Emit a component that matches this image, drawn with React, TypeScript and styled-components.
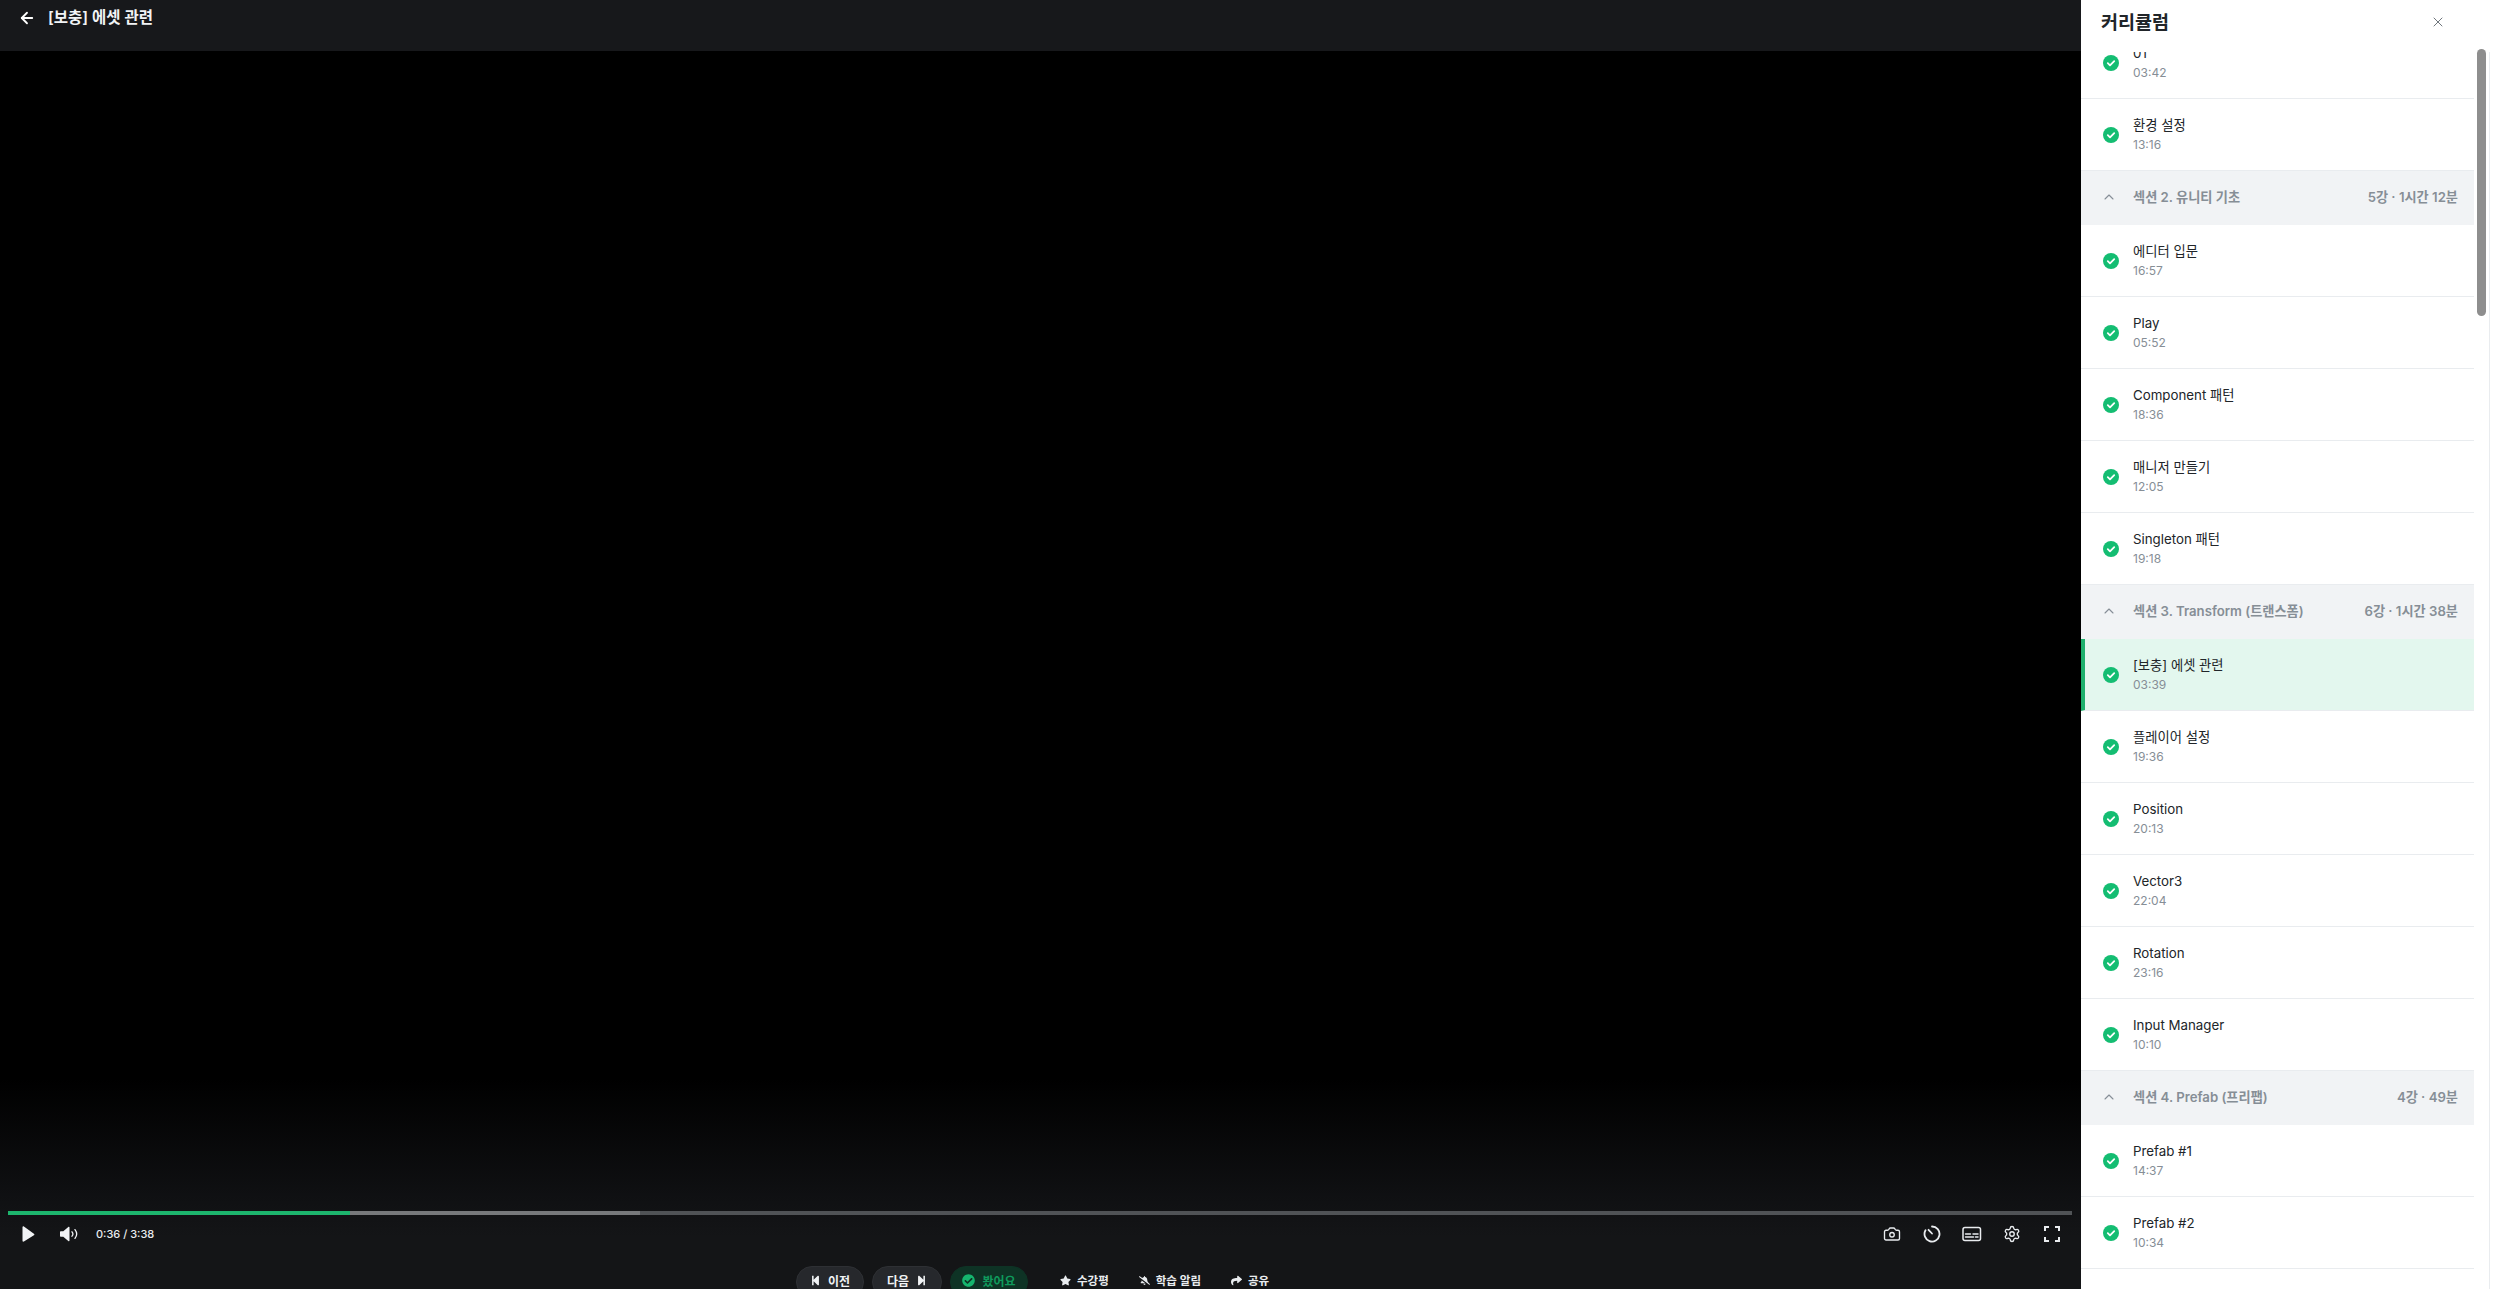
import React from "react";
import styled, { createGlobalStyle } from "styled-components";
import { ArrowLeft, Camera, ChevronUp, Settings, X } from "lucide-react";
import { FaBellSlash, FaCheckCircle, FaShare, FaStar, FaStepBackward, FaStepForward } from "react-icons/fa";

const Global = createGlobalStyle`
  html, body { margin: 0; padding: 0; height: 100%; overflow: hidden; background: #000; }
  body { font-family: Inter, "Noto Sans CJK KR", "Noto Sans", sans-serif; }
  * { box-sizing: border-box; }
`;

const Page = styled.div`
  display: flex;
  width: 2494px;
  height: 1289px;
  overflow: hidden;
`;
const PlayerColumn = styled.main`
  flex: 0 0 2081px;
  display: flex;
  flex-direction: column;
  height: 1289px;
  overflow: hidden;
  background: #000;
`;
const TopBar = styled.header`
  flex: 0 0 51px;
  display: flex;
  align-items: flex-start;
  gap: 12px;
  padding: 8px 0 0 18px;
  background: #17181b;
  color: #fff;
`;
const BackIcon = styled(ArrowLeft)`
  width: 18px;
  height: 18px;
  margin-top: 1px;
`;
const LessonTitle = styled.h1`
  margin: 0;
  font-size: 15.5px;
  line-height: 20px;
  font-weight: 600;
  color: #f1f3f5;
`;
const Video = styled.div`
  flex: 1 1 0;
  background: #000;
`;
const Controls = styled.section`
  flex: 0 0 210px;
  display: flex;
  flex-direction: column;
  padding-top: 132px;
  overflow: hidden;
  background: linear-gradient(180deg, #000 0%, #0f1012 55%, #141517 75%);
`;
const Track = styled.div`
  display: flex;
  flex: 0 0 4px;
  margin: 0 9px 0 8px;
  background: #505356;
`;
const TrackPlayed = styled.div`
  flex: 0 0 342px;
  background: #1db56d;
`;
const TrackBuffered = styled.div`
  flex: 0 0 290px;
  background: #77797b;
`;
const PlayerRow = styled.div`
  flex: 0 0 37px;
  display: flex;
  align-items: center;
  margin-bottom: 2px;
  padding: 0 19px 0 21px;
  color: #f1f3f5;
`;
const PlayIcon = styled.svg`
  width: 14px;
  height: 16px;
  margin-right: 25px;
`;
const VolumeIcon = styled.svg`
  width: 18px;
  height: 16px;
  margin-right: 18px;
`;
const TimeText = styled.span`
  font-size: 11px;
  font-weight: 500;
  color: #e9ecef;
`;
const RightTools = styled.div`
  margin-left: auto;
  display: flex;
  align-items: center;
  gap: 20px;
`;
const ToolSlot = styled.span`
  display: flex;
  align-items: center;
  justify-content: center;
  width: 20px;
  height: 20px;
  color: #e9ecef;
`;
const ActionRow = styled.div`
  display: flex;
  justify-content: flex-start;
  align-items: center;
  gap: 8px;
  margin-top: 12px;
  padding-left: 796px;
`;
const NavButton = styled.button<{ $w: number }>`
  display: flex;
  align-items: center;
  justify-content: center;
  gap: 7px;
  width: ${(p) => p.$w}px;
  height: 32px;
  padding: 0 0 4px;
  border: 1px solid #2e3034;
  border-radius: 16px;
  background: #26282c;
  color: #f1f3f5;
  font: 600 12px Inter, "Noto Sans CJK KR", sans-serif;
  svg { width: 11px; height: 11px; }
`;
const DoneButton = styled(NavButton)`
  border-color: #0e3325;
  background: #0e3325;
  color: #0f9a5c;
  svg { width: 13px; height: 13px; color: #15b56e; }
`;
const LinkButton = styled.button<{ $ml: number }>`
  display: flex;
  align-items: center;
  gap: 6px;
  margin-left: ${(p) => p.$ml}px;
  height: 32px;
  padding: 0 0 4px;
  border: 0;
  background: none;
  color: #e9ecef;
  font: 600 11.5px Inter, "Noto Sans CJK KR", sans-serif;
  svg { width: 11px; height: 11px; }
`;
const Panel = styled.aside`
  position: relative;
  flex: 1;
  display: flex;
  flex-direction: column;
  height: 1289px;
  overflow: hidden;
  background: #fff;
`;
const PanelHead = styled.div`
  flex: 0 0 52px;
  display: flex;
  align-items: flex-start;
  justify-content: space-between;
  padding: 9px 48px 0 20px;
  background: #fff;
  position: relative;
  z-index: 1;
`;
const PanelTitle = styled.h2`
  margin: 0;
  font-size: 18.5px;
  line-height: 26px;
  font-weight: 700;
  color: #212529;
`;
const CloseIcon = styled(X)`
  width: 16px;
  height: 16px;
  margin-top: 5px;
  color: #6f767c;
`;
const ListClip = styled.div`
  flex: 1;
  overflow: hidden;
  border-right: 1px solid #e9ecef;
  margin-right: 4px;
`;
const List = styled.div`
  width: 393px;
  margin-top: -25px;
`;
const SectionHead = styled.div`
  display: flex;
  align-items: center;
  height: 54px;
  padding: 0 16px 3px 20px;
  background: #f1f3f5;
  color: #868e96;
  font-size: 13.2px;
  font-weight: 600;
`;
const Chevron = styled(ChevronUp)`
  width: 16px;
  height: 16px;
  margin-right: 16px;
  color: #868e96;
  stroke-width: 1.6;
`;
const SectionMeta = styled.span`
  margin-left: auto;
`;
const Row = styled.div<{ $active?: boolean }>`
  display: flex;
  align-items: flex-start;
  height: 72px;
  padding: 20px 0 0 ${(p) => (p.$active ? 18 : 22)}px;
  background: ${(p) => (p.$active ? "#e3f7ee" : "#fff")};
  border-left: ${(p) => (p.$active ? "4px solid #1eb06c" : "0")};
  border-bottom: 1px solid #e9ecef;
`;
const CheckIcon = styled.svg`
  flex: 0 0 16px;
  width: 16px;
  height: 16px;
  margin: 8px 14px 0 0;
`;
const RowText = styled.div`
  display: flex;
  flex-direction: column;
  margin-top: -3px;
`;
const RowTitle = styled.span`
  font-size: 13.3px;
  line-height: 18px;
  font-weight: 400;
  color: #212529;
`;
const RowTime = styled.span`
  margin-top: 2px;
  font-size: 12px;
  line-height: 18px;
  color: #868e96;
`;
const Thumb = styled.div`
  position: absolute;
  top: 49px;
  left: 396px;
  width: 9px;
  height: 267px;
  border-radius: 5px;
  background: #8e8e8e;
  z-index: 2;
`;

type Item = { section: true; title: string; meta: string } | { section?: false; title: string; time: string; active?: boolean };

const items: Item[] = [
  { title: "01", time: "03:42" },
  { title: "환경 설정", time: "13:16" },
  { section: true, title: "섹션 2. 유니티 기초", meta: "5강 · 1시간 12분" },
  { title: "에디터 입문", time: "16:57" },
  { title: "Play", time: "05:52" },
  { title: "Component 패턴", time: "18:36" },
  { title: "매니저 만들기", time: "12:05" },
  { title: "Singleton 패턴", time: "19:18" },
  { section: true, title: "섹션 3. Transform (트랜스폼)", meta: "6강 · 1시간 38분" },
  { title: "[보충] 에셋 관련", time: "03:39", active: true },
  { title: "플레이어 설정", time: "19:36" },
  { title: "Position", time: "20:13" },
  { title: "Vector3", time: "22:04" },
  { title: "Rotation", time: "23:16" },
  { title: "Input Manager", time: "10:10" },
  { section: true, title: "섹션 4. Prefab (프리팹)", meta: "4강 · 49분" },
  { title: "Prefab #1", time: "14:37" },
  { title: "Prefab #2", time: "10:34" },
];

const Check = () => (
  <CheckIcon viewBox="0 0 16 16">
    <circle cx="8" cy="8" r="8" fill="#14bd72" />
    <path d="M4.8 8.2l2.2 2.1 4.2-4.2" fill="none" stroke="#fff" strokeWidth="1.8" strokeLinecap="round" strokeLinejoin="round" />
  </CheckIcon>
);

export default function App() {
  return (
    <Page>
      <Global />
      <PlayerColumn>
        <TopBar>
          <BackIcon strokeWidth={2.4} />
          <LessonTitle>[보충] 에셋 관련</LessonTitle>
        </TopBar>
        <Video />
        <Controls>
          <Track>
            <TrackPlayed />
            <TrackBuffered />
          </Track>
          <PlayerRow>
            <PlayIcon viewBox="0 0 14 16">
              <path d="M1.5 1.2v13.6c0 .8.7 1 1.4.7l10-6.2c.7-.5.7-1 0-1.5L2.9.5C2.200.1 1.500.4 1.500 1.200z" fill="currentColor" />
            </PlayIcon>
            <VolumeIcon viewBox="0 0 18 16">
              <path d="M0 6.300c0-.6.400-1 1-1h2.300L8.300 1c.6-.5 1.200-.2 1.200.6v12.800c0 .8-.6 1.100-1.200.6l-5-4.300H1c-.6 0-1-.4-1-1z" fill="currentColor" />
              <path d="M12 5.800c1.100 1.300 1.100 3.100 0 4.400M15 3.600c2 2.600 2 6.200 0 8.800" fill="none" stroke="currentColor" strokeWidth="1.300" strokeLinecap="round" />
            </VolumeIcon>
            <TimeText>0:36 / 3:38</TimeText>
            <RightTools>
              <ToolSlot><Camera size={18} strokeWidth={1.8} /></ToolSlot>
              <ToolSlot>
                <svg width="18" height="18" viewBox="0 0 18 18" fill="none" stroke="currentColor" strokeWidth="1.800" strokeLinecap="round">
                  <path d="M9 1.500a7.500 7.500 0 1 1-6.500 3.800" />
                  <path d="M5.500 4.800L9 8.500" />
                </svg>
              </ToolSlot>
              <ToolSlot>
                <svg width="20" height="16" viewBox="0 0 20 16" fill="none" stroke="currentColor" strokeWidth="1.500" strokeLinecap="round">
                  <rect x="1" y="1.500" width="17.500" height="13" rx="2" />
                  <path d="M3.500 8h5M11 8h5M3.500 11h8M13.500 11h2.500" />
                </svg>
              </ToolSlot>
              <ToolSlot><Settings size={18} strokeWidth={1.8} /></ToolSlot>
              <ToolSlot>
                <svg width="16" height="16" viewBox="0 0 16 16" fill="none" stroke="currentColor" strokeWidth="2">
                  <path d="M1 5V1h4M11 1h4v4M15 11v4h-4M5 15H1v-4" />
                </svg>
              </ToolSlot>
            </RightTools>
          </PlayerRow>
          <ActionRow>
            <NavButton $w={68}><FaStepBackward />이전</NavButton>
            <NavButton $w={70}>다음<FaStepForward /></NavButton>
            <DoneButton $w={78}><FaCheckCircle />봤어요</DoneButton>
            <LinkButton $ml={24}><FaStar />수강평</LinkButton>
            <LinkButton $ml={22}><FaBellSlash />학습 알림</LinkButton>
            <LinkButton $ml={22}><FaShare />공유</LinkButton>
          </ActionRow>
        </Controls>
      </PlayerColumn>
      <Panel>
        <PanelHead>
          <PanelTitle>커리큘럼</PanelTitle>
          <CloseIcon strokeWidth={1.5} />
        </PanelHead>
        <ListClip>
          <List>
            {items.map((it) =>
              it.section ? (
                <SectionHead key={it.title}>
                  <Chevron />
                  {it.title}
                  <SectionMeta>{it.meta}</SectionMeta>
                </SectionHead>
              ) : (
                <Row key={it.title} $active={it.active}>
                  <Check />
                  <RowText>
                    <RowTitle>{it.title}</RowTitle>
                    <RowTime>{it.time}</RowTime>
                  </RowText>
                </Row>
              )
            )}
          </List>
        </ListClip>
        <Thumb />
      </Panel>
    </Page>
  );
}
